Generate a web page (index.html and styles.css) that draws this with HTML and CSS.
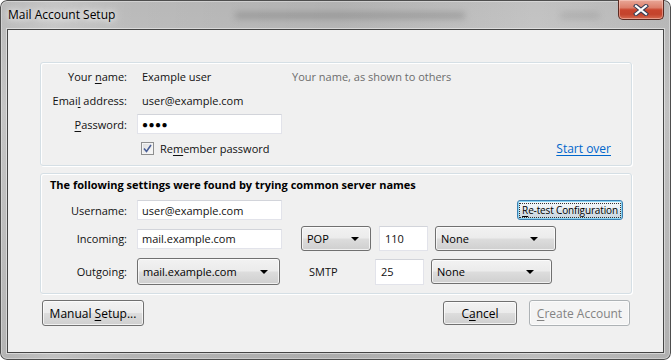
FILE: index.html
```html
<!DOCTYPE html>
<html>
<head>
<meta charset="utf-8">
<link rel="stylesheet" href="styles.css">
</head>
<body>
<div class="window">
  <div class="titlebar">
    <span class="title">Mail Account Setup</span>
    <span class="smudge smudge-a"></span>
    <span class="smudge smudge-b"></span>
    <button class="close" aria-label="Close">
      <svg width="16" height="12" viewBox="0 0 16 12">
        <path d="M3 2 L13 10 M13 2 L3 10" stroke="#3a3f55" stroke-width="4.2" stroke-linecap="square" fill="none"/>
        <path d="M3 2 L13 10 M13 2 L3 10" stroke="#ffffff" stroke-width="2.2" stroke-linecap="square" fill="none"/>
      </svg>
    </button>
  </div>
  <div class="client">
    <div class="group g1">
      <span class="lbl">Your <u>n</u>ame:</span>
      <span class="val">Example user</span>
      <span class="hint">Your name, as shown to others</span>

      <span class="lbl">Emai<u>l</u> address:</span>
      <span class="val">user@example.com</span>
      <span></span>

      <span class="lbl"><u>P</u>assword:</span>
      <span class="input pw">●●●●</span>
      <span></span>

      <span></span>
      <span class="check-row"><span class="checkbox"><svg width="9" height="9" viewBox="0 0 9 9"><path d="M1 4.5 L3.5 7.5 L8 1" stroke="#4a5f97" stroke-width="1.6" fill="none"/></svg></span>Re<u>m</u>ember password</span>
      <a class="link">Start over</a>
    </div>

    <div class="group g2">
      <div class="head">The following settings were found by trying common server names</div>
      <div class="row r-user">
        <span class="lbl">Username:</span>
        <span class="input w-main">user@example.com</span>
        <button class="btn retest"><span class="focus"><u>R</u>e-test Configuration</span></button>
      </div>
      <div class="row r-in">
        <span class="lbl">Incoming:</span>
        <span class="input w-main">mail.example.com</span>
        <span class="select sel-pop">POP<i class="arrow"></i></span>
        <span class="input port port-in">110</span>
        <span class="select sel-none">None<i class="arrow"></i></span>
      </div>
      <div class="row r-out">
        <span class="lbl">Outgoing:</span>
        <span class="select sel-out">mail.example.com<i class="arrow"></i></span>
        <span class="smtp">SMTP</span>
        <span class="input port">25</span>
        <span class="select sel-none">None<i class="arrow"></i></span>
      </div>
    </div>

    <div class="buttons">
      <button class="btn manual">Manual <u>S</u>etup...</button>
      <button class="btn cancel">C<u>a</u>ncel</button>
      <button class="btn create" disabled><u>C</u>reate Account</button>
    </div>
  </div>
</div>
</body>
</html>
```
FILE: styles.css
```css
html, body {
  margin: 0;
  padding: 0;
}
body {
  font-family: "Open Sans", "Noto Sans", sans-serif;
  font-size: 11px;
  color: #111;
}
u { text-decoration: underline; text-underline-offset: 2px; }

.window {
  width: 671px;
  height: 360px;
  box-sizing: border-box;
  display: flex;
  flex-direction: column;
  border-radius: 7px;
  overflow: hidden;
  background:
    linear-gradient(90deg, rgba(255,255,255,0.0) 0%, rgba(255,255,255,0.18) 8%, rgba(255,255,255,0.0) 20%, rgba(0,0,0,0.04) 50%, rgba(255,255,255,0.12) 80%, rgba(0,0,0,0.02) 100%),
    linear-gradient(180deg, #b9b9b9 0%, #c4c4c4 30%, #bdbdbd 60%, #b3b3b3 100%);
  box-shadow: inset 0 0 0 1px #4e4e4e, inset 0 0 0 2px rgba(255,255,255,0.35);
}

.titlebar {
  height: 29px;
  flex: none;
  display: flex;
  align-items: flex-start;
  padding: 0 7px 0 8px;
  box-sizing: border-box;
}
.title {
  font-size: 12px;
  margin-top: 6px;
  line-height: 17px;
  color: #000;
  text-shadow: 0 0 6px #fff, 0 0 10px rgba(255,255,255,0.9);
}
.smudge {
  height: 7px;
  margin-top: 12px;
  background: rgba(60,60,60,0.22);
  filter: blur(3px);
  border-radius: 4px;
}
.smudge-a { width: 230px; margin-left: 120px; }
.smudge-b { width: 40px; margin-left: 95px; background: rgba(60,60,60,0.12); }

.close {
  margin-left: auto;
  width: 46px;
  height: 20px;
  padding: 0;
  border: 1px solid #5b2a22;
  border-top: none;
  border-radius: 0 0 5px 5px;
  background: linear-gradient(180deg, #e9a797 0%, #dc7f6b 40%, #c9452e 52%, #c4432c 75%, #d56a50 100%);
  box-shadow: inset 0 0 0 1px rgba(255,220,210,0.45);
  display: flex;
  align-items: center;
  justify-content: center;
}

.client {
  flex: 1;
  margin: 0 7px 7px 7px;
  border: 1px solid #454545;
  box-shadow: 0 0 0 1px rgba(255,255,255,0.45);
  background: #f0f0f0;
  padding: 32px 31px 0 32px;
  display: flex;
  flex-direction: column;
}

.group {
  border: 1px solid #d5dfe5;
  border-radius: 3px;
  box-shadow: 1px 1px 0 #fff, inset 1px 1px 0 #fff;
}

.g1 {
  display: grid;
  grid-template-columns: 86px 145px 1fr;
  grid-auto-rows: 20px;
  column-gap: 10px;
  row-gap: 4px;
  align-items: center;
  padding: 3px 20px 7px 0;
}
.lbl {
  text-align: right;
  white-space: nowrap;
}
.val { padding-left: 5px; white-space: nowrap; }
.hint { color: #6d6d6d; white-space: nowrap; }

.input {
  box-sizing: border-box;
  height: 20px;
  background: #fff;
  border: 1px solid #e2e3ea;
  border-top-color: #d2d4da;
  padding: 0 4px;
  display: flex;
  align-items: center;
  white-space: nowrap;
}
.pw { font-size: 10px; letter-spacing: 0.5px; color: #000; }

.check-row {
  display: flex;
  align-items: center;
  white-space: nowrap;
  padding-left: 4px;
}
.checkbox {
  box-sizing: border-box;
  width: 13px;
  height: 13px;
  border: 1px solid #8e8f8f;
  background: linear-gradient(135deg, #dcdcdc, #fbfbfb);
  box-shadow: inset 0 0 0 1px #f4f4f4;
  display: flex;
  align-items: center;
  justify-content: center;
  margin-right: 6px;
}
.link {
  justify-self: end;
  color: #0066cc;
  text-decoration: underline;
  text-underline-offset: 2px;
  font-size: 12px;
}

.g2 {
  margin-top: 7px;
  display: flex;
  flex-direction: column;
  padding: 3px 8px 8px 0;
}
.head {
  font-weight: bold;
  line-height: 16px;
  padding-left: 9px;
  color: #000;
  white-space: nowrap;
}
.row {
  display: flex;
  align-items: center;
}
.row .lbl { width: 86px; margin-right: 10px; flex: none; }
.r-user { height: 20px; margin-top: 7px; }
.r-in { height: 25px; margin-top: 6px; }
.r-out { height: 27px; margin-top: 7px; }
.w-main { width: 145px; }

.btn, .select {
  box-sizing: border-box;
  font-family: inherit;
  font-size: 11px;
  color: #000;
  border: 1px solid #707070;
  border-radius: 3px;
  background: linear-gradient(180deg, #f2f2f2 0%, #ebebeb 49%, #dddddd 51%, #cfcfcf 100%);
  box-shadow: inset 0 0 0 1px rgba(255,255,255,0.7);
  padding: 0;
}
.select {
  display: flex;
  align-items: center;
  padding-left: 5px;
  white-space: nowrap;
}
.arrow {
  margin-left: auto;
  margin-right: 11px;
  width: 0;
  height: 0;
  border-left: 4px solid transparent;
  border-right: 4px solid transparent;
  border-top: 4px solid #000;
}
.sel-pop { width: 70px; height: 25px; margin-left: 19px; }
.port { width: 49px; height: 25px; padding-left: 5px; }
.port-in { margin-left: 8px; }
.sel-none { width: 121px; height: 25px; margin-left: 7px; }
.sel-none .arrow { margin-right: 17px; }
.sel-out { width: 143px; height: 27px; }
.smtp { box-sizing: border-box; width: 95px; padding-left: 29px; }
.r-out .port { height: 26px; }

.retest {
  margin-left: auto;
  width: 106px;
  height: 20px;
  font-size: 10px;
  letter-spacing: -0.15px;
  white-space: nowrap;
  border-color: #3c7fb1;
  background: linear-gradient(180deg, #f4f8fb 0%, #e7eef3 49%, #d9e3ea 51%, #cad6df 100%);
  box-shadow: inset 0 0 0 1px #8ad6f5;
  display: flex;
  align-items: center;
  justify-content: center;
}
.focus {
  box-sizing: border-box;
  width: 100px;
  text-align: center;
  outline: 1px dotted #333;
  outline-offset: 0;
  line-height: 13px;
  white-space: nowrap;
}

.buttons {
  display: flex;
  align-items: center;
  margin-top: 6px;
  padding: 0 2px;
}
.buttons .btn { font-size: 12px; white-space: nowrap; }
.manual { width: 102px; height: 26px; }
.cancel { width: 74px; height: 24px; margin-left: auto; }
.create {
  width: 101px;
  height: 26px;
  margin-left: 12px;
  color: #838383;
  border-color: #adb2b5;
  background: #f4f4f4;
  box-shadow: inset 0 0 0 1px #fbfbfb;
}
```
